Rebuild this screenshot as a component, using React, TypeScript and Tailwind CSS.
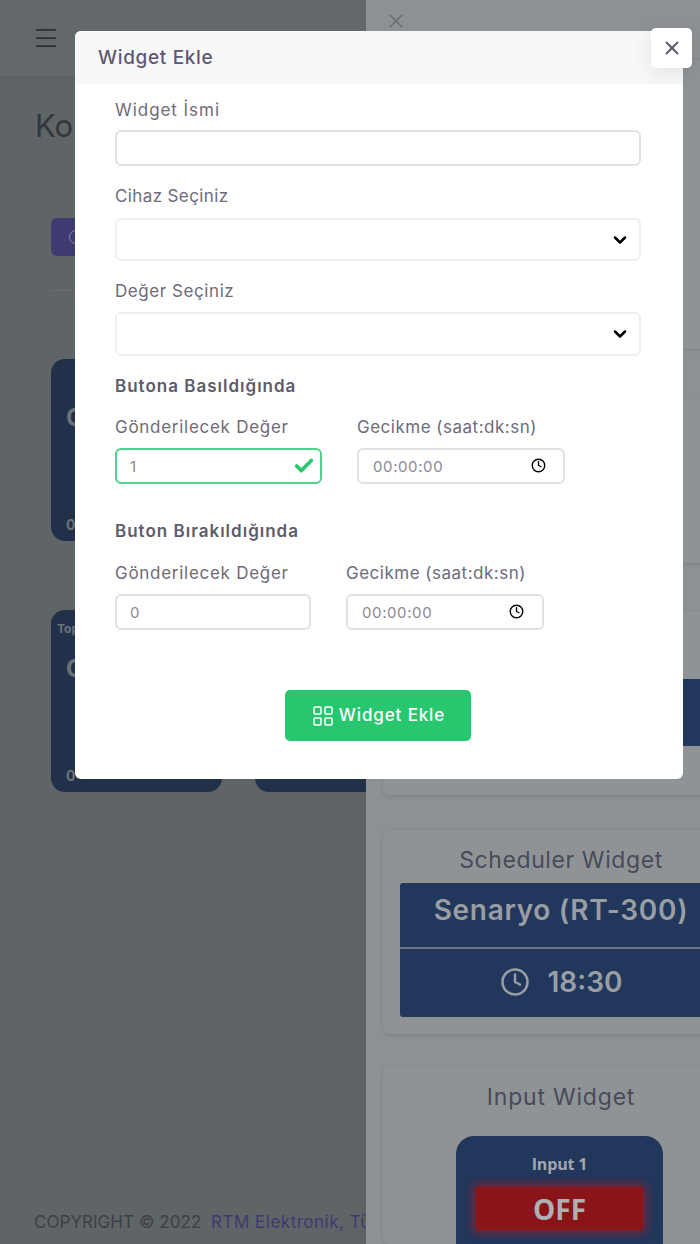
import { Check, ChevronDown, Clock, LayoutGrid, Menu, X } from "lucide-react";

const font = { fontFamily: "Inter, 'Noto Sans', sans-serif" };

function DimCard({ top }: { top?: string }) {
  return (
    <div className="w-[171px] h-[182px] shrink-0 rounded-[14px] bg-[#22314a] text-[#6d7277] font-bold relative px-[15px] pt-[11px]">
      <div className="h-[16px] text-[12px] leading-[16px] -ml-[9px]">{top}</div>
      <div className="text-[24px] leading-[30px] mt-[17px]">C</div>
      <div className="text-[14px] leading-[18px] mt-[83px]">0</div>
    </div>
  );
}

function Page() {
  return (
    <div className="w-[366px] h-full flex flex-col shadow-[inset_-12px_0_12px_-12px_rgba(0,0,0,0.08)]">
      <div className="h-[76px] shrink-0 bg-[#63686b] flex items-center pl-[32px] shadow-[0_2px_6px_rgba(0,0,0,0.04)]">
        <Menu size={28} strokeWidth={1.5} className="text-[#2c3033]" />
      </div>
      <div className="pl-[35px] mt-[29px] text-[31px] leading-[42px] text-[#33373b] whitespace-nowrap">Kontrol</div>
      <div className="pl-[51px] mt-[71px]">
        <div className="w-[120px] h-[38px] rounded-[6px] bg-[#3d3b6f] flex items-center pl-[18px]">
          <div className="w-[14px] h-[14px] rounded-full border border-[#8d8ba8]" />
        </div>
        <div className="h-px bg-[#6a6e72] mt-[34px]" />
      </div>
      <div className="pl-[51px] mt-[68px] flex gap-[33px]">
        <DimCard />
        <div className="w-[120px] h-[182px] rounded-l-[14px] bg-[#22314a]" />
      </div>
      <div className="pl-[51px] mt-[69px] flex gap-[33px]">
        <DimCard top="Top" />
        <div className="w-[111px] h-[182px] rounded-l-[14px] bg-[#22314a]" />
      </div>
      <div className="pl-[34px] mt-auto mb-[12px] text-[17px] leading-[20px] text-[#3c4044] whitespace-nowrap overflow-hidden tracking-[0.05px]">
        COPYRIGHT © 2022&nbsp; <span className="text-[#3d3b6f] tracking-[0.5px]">RTM Elektronik, Tüm</span>
      </div>
    </div>
  );
}

function Drawer() {
  const card = "ml-[17px] w-[339px] rounded-l-[6px] bg-[#909396] shadow-[0_1px_4px_rgba(0,0,0,0.12)]";
  return (
    <div className="absolute left-[366px] top-0 bottom-0 w-[334px] bg-[#8e9194] overflow-hidden flex flex-col">
      <div className="h-[42px] shrink-0 flex items-center pl-[18px]">
        <X size={24} strokeWidth={1.3} className="text-[#66696c]" />
      </div>
      <div className="h-[18px] shrink-0 border-b border-[#888b8e]" />
      <div className={`${card} h-[289px] shrink-0`} />
      <div className={`${card} h-[164px] mt-[50px] shrink-0`} />
      <div className={`${card} h-[183px] mt-[49px] shrink-0 flex flex-col justify-end pb-[49px]`}>
        <div className="h-[67px] ml-[17px] rounded-l-[4px] bg-[#22375c]" />
      </div>
      <div className={`${card} h-[204px] mt-[35px] shrink-0 pl-[17px] flex flex-col`}>
        <div className="h-[53px] pt-[7px] flex items-center justify-center text-[23px] text-[#484a5a] tracking-[0.6px] whitespace-nowrap">Scheduler Widget</div>
        <div className="h-[134px] bg-[#22375c] rounded-l-[3px] text-[#9a9ea3] font-semibold">
          <div className="h-[66px] pb-[10px] flex items-center justify-center text-[28px] tracking-[0.7px] border-b-2 border-[#6d7786] whitespace-nowrap">Senaryo (RT-300)</div>
          <div className="h-[66px] flex items-center justify-center gap-[18px] text-[28px]">
            <Clock size={30} strokeWidth={2} />
            18:30
          </div>
        </div>
      </div>
      <div className={`${card} mt-[33px] grow pl-[17px] flex flex-col`}>
        <div className="h-[60px] flex items-center justify-center text-[23px] text-[#484a5a] tracking-[0.8px] whitespace-nowrap">Input Widget</div>
        <div className="ml-[56px] mt-[9px] w-[207px] grow rounded-t-[18px] bg-[#22375c] flex flex-col items-center" style={{ fontFamily: "'Open Sans', sans-serif" }}>
          <div className="mt-[16px] h-[24px] text-[16px] leading-[24px] font-bold text-[#a2a7ad] tracking-[-0.01em]">Input 1</div>
          <div className="mt-[11px] w-[167px] h-[43px] rounded-[2px] bg-[#8a1518] shadow-[0_0_10px_3px_rgba(150,30,40,0.8)] flex items-center justify-center text-[28px] font-bold text-[#aeb0b2]">OFF</div>
        </div>
      </div>
    </div>
  );
}

const label = "block text-[17px] leading-[24px] text-[#6e6b7b] whitespace-nowrap";
const field = "block h-[36px] rounded-[6px] border-2 bg-white text-[15px] text-[#8b8996] outline-none tracking-[0.6px]";
const heading = "text-[17px] leading-[22px] font-semibold text-[#5e5b6b] tracking-[1px] whitespace-nowrap";

function Sel({ h }: { h: string }) {
  return (
    <div className="relative mt-[10px]">
      <select className={`block w-full ${h} rounded-[6px] border-2 border-[#eeedf1] bg-white appearance-none outline-none`} />
      <ChevronDown size={20} strokeWidth={3} className="absolute right-[11px] top-[12px] text-black" />
    </div>
  );
}

function TimeField({ right }: { right: string }) {
  return (
    <div className="relative mt-[9px] w-full">
      <input defaultValue="00:00:00" className={`${field} border-[#e2e1e8] w-full pl-[14px]`} />
      <Clock size={15} strokeWidth={2.2} className={`absolute top-[10px] ${right} text-black`} />
    </div>
  );
}

function Modal() {
  return (
    <div className="absolute left-[75px] top-[31px] w-[608px] h-[748px] rounded-[6px] bg-white">
      <div className="h-[53px] pt-[1px] rounded-t-[6px] bg-[#f8f8f8] flex items-center pl-[23px] text-[19px] font-medium text-[#5e5873] tracking-[0.66px]">Widget Ekle</div>
      <button className="absolute left-[576px] -top-[3px] w-[41px] h-[40px] rounded-[5px] bg-white flex items-center justify-center text-[#5e5873] shadow-[0_5px_20px_rgba(34,41,47,0.1)]">
        <X size={22} strokeWidth={2.2} />
      </button>
      <form className="pl-[40px] pr-[42px] pt-[14px]">
        <label className={`${label} tracking-[0.95px]`}>Widget İsmi</label>
        <input className={`${field} border-[#e2e1e8] w-full mt-[8px]`} />
        <label className={`${label} mt-[18px] tracking-[0.38px]`}>Cihaz Seçiniz</label>
        <Sel h="h-[43px]" />
        <label className={`${label} mt-[18px] -mb-[1px] tracking-[0.57px]`}>Değer Seçiniz</label>
        <Sel h="h-[44px]" />
        <div className={`${heading} mt-[19px]`}>Butona Basıldığında</div>
        <div className="flex gap-[35px] mt-[18px]">
          <div className="w-[207px]">
            <label className={`${label} tracking-[0.72px]`}>Gönderilecek Değer</label>
            <div className="relative mt-[9px]">
              <input defaultValue="1" className={`${field} border-[#4fd18b] w-full pl-[13px]`} />
              <Check size={22} strokeWidth={4} className="absolute right-[7px] top-[7px] text-[#28c76f]" />
            </div>
          </div>
          <div className="w-[208px]">
            <label className={`${label} tracking-[0.5px]`}>Gecikme (saat:dk:sn)</label>
            <TimeField right="right-[19px]" />
          </div>
        </div>
        <div className={`${heading} mt-[36px]`}>Buton Bırakıldığında</div>
        <div className="flex gap-[35px] mt-[19px]">
          <div className="w-[196px]">
            <label className={`${label} tracking-[0.72px]`}>Gönderilecek Değer</label>
            <input defaultValue="0" className={`${field} border-[#e2e1e8] w-full mt-[9px] pl-[13px]`} />
          </div>
          <div className="w-[198px]">
            <label className={`${label} tracking-[0.5px]`}>Gecikme (saat:dk:sn)</label>
            <TimeField right="right-[20px]" />
          </div>
        </div>
        <div className="flex justify-center mt-[60px]">
          <button type="button" className="w-[186px] h-[51px] rounded-[5px] bg-[#28c76f] text-white text-[17px] font-medium tracking-[0.87px] flex items-center justify-center gap-[4px]">
            <LayoutGrid size={24} strokeWidth={1.5} />
            Widget Ekle
          </button>
        </div>
      </form>
    </div>
  );
}

export default function App() {
  return (
    <div className="relative w-[700px] h-[1244px] overflow-hidden bg-[#5f6467]" style={font}>
      <Page />
      <Drawer />
      <Modal />
    </div>
  );
}
